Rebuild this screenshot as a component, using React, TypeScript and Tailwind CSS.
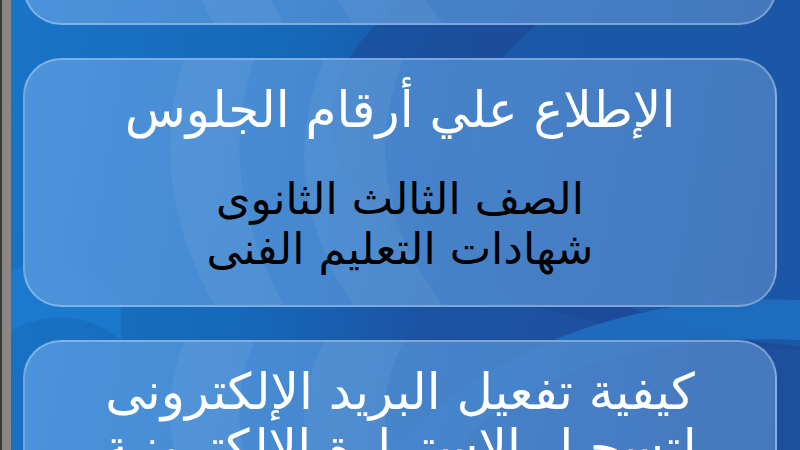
import React from "react";

const font = { fontFamily: '"DejaVu Sans", "Noto Sans", sans-serif' };

function Card({ children, className = "" }: { children?: React.ReactNode; className?: string }) {
  return (
    <div
      className={`relative overflow-hidden w-[754px] shrink-0 rounded-[38px] border-2 border-white/30 bg-[linear-gradient(100deg,rgba(82,152,222,0.88)_0%,rgba(76,140,210,0.88)_45%,rgba(74,124,192,0.9)_100%)] flex flex-col items-center ${className}`}
    >
      <svg className="absolute inset-0 w-full h-full pointer-events-none" viewBox="0 0 754 250" preserveAspectRatio="none">
        <path d="M160 0 Q120 120 190 250 L260 250 Q190 120 230 0 Z" fill="#ffffff" fillOpacity="0.06" />
        <path d="M300 0 Q250 130 330 250 L420 250 Q330 130 380 0 Z" fill="#ffffff" fillOpacity="0.05" />
      </svg>
      <div className="relative flex flex-col items-center">{children}</div>
    </div>
  );
}

export default function App() {
  return (
    <div className="w-[800px] h-[450px] overflow-hidden flex bg-[#1b5fae]" dir="ltr" style={font}>
      <div className="w-[11px] h-full flex shrink-0">
        <div className="w-[2px] h-full bg-[#3a3a3a]" />
        <div className="w-[9px] h-full bg-[#8a8787]" />
      </div>
      <div className="relative flex-1 h-full overflow-hidden bg-[linear-gradient(100deg,#1a74c8_0%,#1667b8_35%,#1d52a2_55%,#1e4f9d_100%)]">
        <svg className="absolute inset-0 w-full h-full" viewBox="0 0 789 450" preserveAspectRatio="none">
          <ellipse cx="820" cy="120" rx="500" ry="230" fill="#1c4894" fillOpacity="0.55" />
          <ellipse cx="860" cy="140" rx="400" ry="210" fill="#1b5cac" fillOpacity="0.7" />
          <path d="M440 450 Q560 330 789 340 L789 300 Q540 290 380 450 Z" fill="#1f72c4" fillOpacity="0.8" />
          <path d="M0 270 Q60 250 110 300 L110 340 Q60 300 0 330 Z" fill="#1c80d6" fillOpacity="0.6" />
        </svg>
        <div className="relative flex flex-col items-start gap-[33px] pl-[12px] mt-[-200px]">
          <Card className="h-[225px]" />
          <Card className="h-[249px]">
            <div className="mt-[22px] text-white text-[50px] leading-[56px] whitespace-nowrap" dir="rtl">
              الإطلاع علي أرقام الجلوس
            </div>
            <div className="mt-[36px] text-black text-[44px] leading-[50px] text-center whitespace-nowrap" dir="rtl">
              <div>الصف الثالث الثانوى</div>
              <div>شهادات التعليم الفنى</div>
            </div>
          </Card>
          <Card className="h-[200px]">
            <div className="mt-[22px] text-white text-[50px] leading-[56px] text-center whitespace-nowrap" dir="rtl">
              <div>كيفية تفعيل البريد الإلكترونى</div>
              <div>لتسجيل الاستمارة الإلكترونية</div>
            </div>
          </Card>
        </div>
      </div>
    </div>
  );
}
